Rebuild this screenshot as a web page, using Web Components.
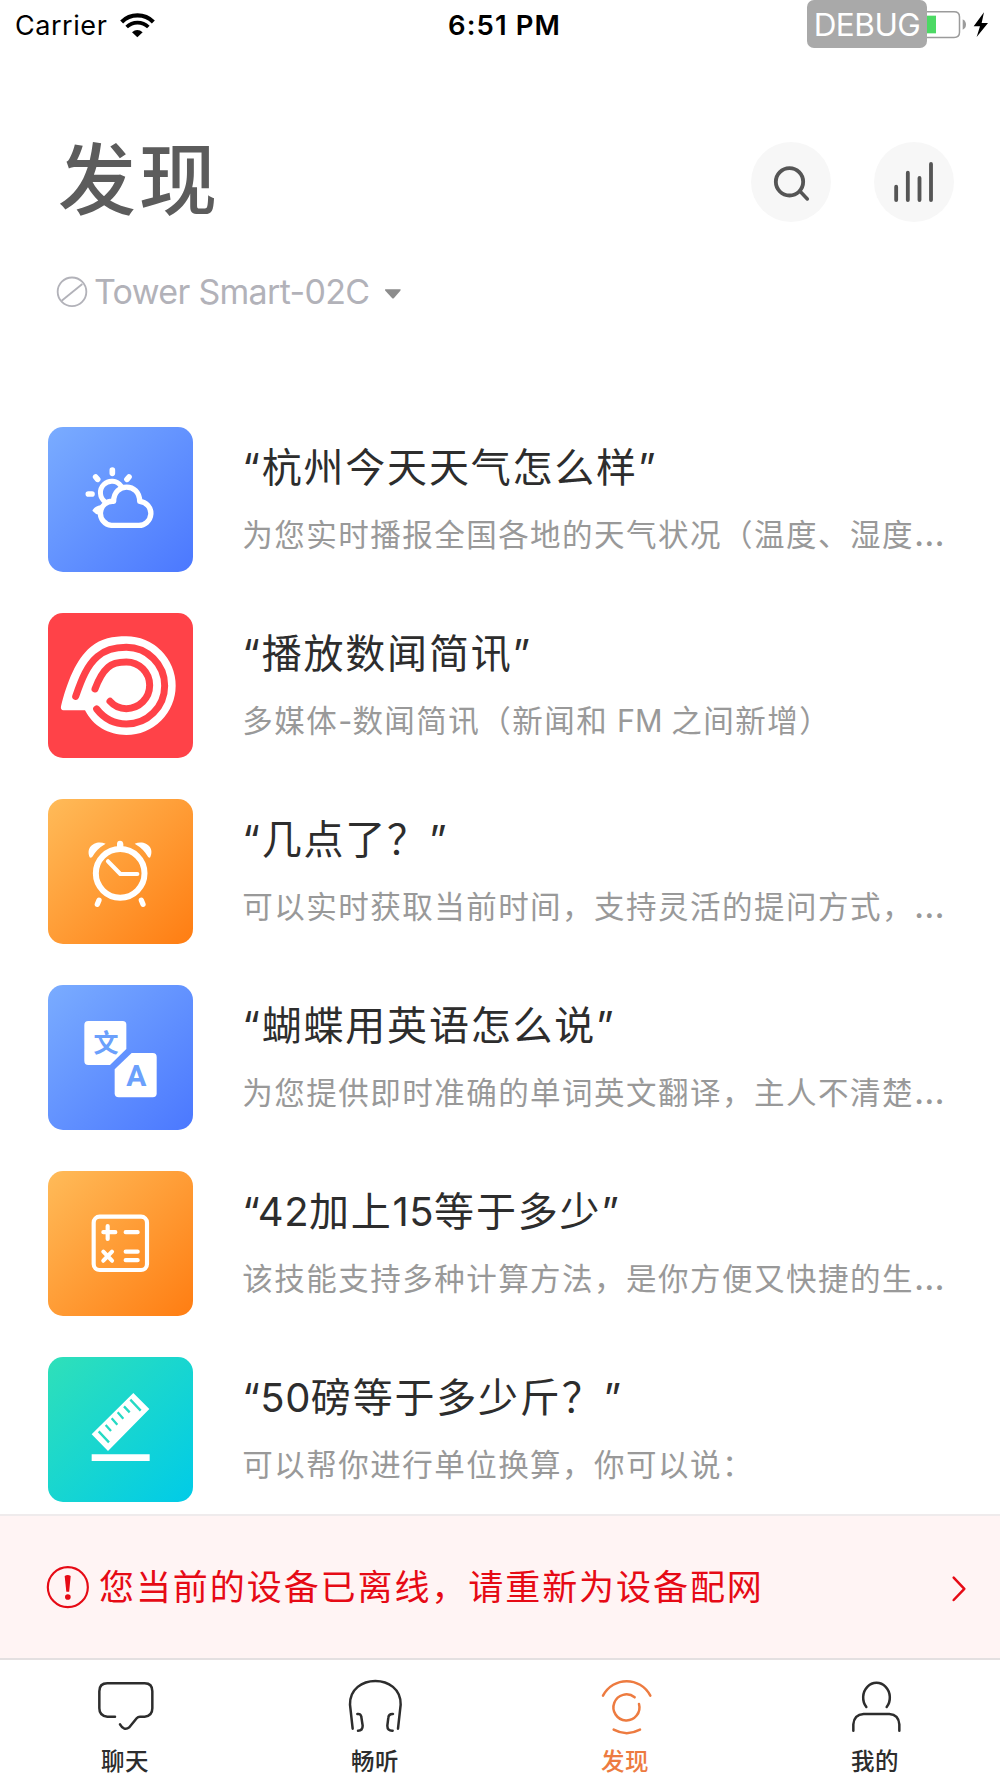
<!DOCTYPE html>
<html lang="zh-CN">
<head>
<meta charset="utf-8">
<title>发现</title>
<style>
html,body{margin:0;padding:0;background:#fff}
body{font-family:Inter,"Noto Sans CJK SC",sans-serif;color:#2d2d2d}
</style>
</head>
<body>
<discover-app></discover-app>
<script>
const define=(name,html)=>customElements.define(name,class extends HTMLElement{
  constructor(){
    super();
    const t=document.createElement('template');
    t.innerHTML=html;
    this.attachShadow({mode:'open'}).append(t.content.cloneNode(true));
  }
});

define('status-bar',`<style>
:host{display:grid;grid-template-columns:1fr auto 1fr;height:51px;color:#000;font-size:27px;line-height:50px}
.l,.r{display:flex;align-items:center}
.l{padding-left:15px;gap:13px;letter-spacing:.55px}
.l svg{margin-top:-2px}
.m{font-weight:600;font-size:27.500px;letter-spacing:1.100px;padding:0 0 0 9px}
.r{justify-content:flex-end;padding-right:12px}
.debug{box-sizing:border-box;width:120px;height:48px;margin-bottom:3px;border-radius:7px;background:#a9a9a9;color:#fff;font-size:31.500px;line-height:49px;text-align:center;letter-spacing:-.5px;font-weight:400}
.r svg{margin-top:-2px}
svg{display:block}
</style>
<div class="l"><span>Carrier</span><svg width="36" height="26" viewBox="361 33 108 78" fill="none" stroke="#000"><path d="M366 63A67 67 0 0 1 461 63" stroke-width="12.500"/><path d="M381 78A47 47 0 0 1 446 78" stroke-width="11"/><path d="M397 94Q413 80 429 94L413 109Z" fill="#000" stroke="none"/></svg></div>
<div class="m">6:51 PM</div>
<div class="r"><div class="debug">DEBUG</div><svg width="61" height="30" viewBox="781 29 183 90"><path d="M781 34.500H862Q878.500 34.500 878.500 50V96Q878.500 111.500 862 111.500H781" fill="none" stroke="#9b9b9b" stroke-width="4.500"/><path d="M781 46H808V99H781Z" fill="#4cd964"/><path d="M888 57Q898 63 898 73T888 88Z" fill="#9b9b9b"/><path d="M952 36L921 78H940L930 110L964 68H945Z" fill="#000"/></svg></div>`);

define('round-button',`<style>
:host{display:flex;width:80px;height:80px;border-radius:50%;background:#f7f7f7;align-items:center;justify-content:center}
::slotted(svg){display:block;width:80px;height:80px}
</style><slot></slot>`);

define('page-header',`<style>
:host{display:flex;justify-content:space-between;height:240px;box-sizing:border-box;padding:84px 46px 0 58px}
h1{margin:0;height:92px;line-height:92px;font-size:78px;font-weight:500;letter-spacing:3px;color:#5c5c5c}
.actions{display:flex;gap:43px;padding-top:7px}
</style>
<h1><slot></slot></h1>
<div class="actions">
<round-button><svg viewBox="753 425 240 240" fill="none" stroke="#555" stroke-linecap="round"><circle cx="868.500" cy="544.500" r="41" stroke-width="11.500"/><path d="M900 573L922 596" stroke-width="10.500"/></svg></round-button>
<round-button><svg viewBox="1123 425 240 240" fill="none" stroke="#555" stroke-width="11.500" stroke-linecap="round"><path d="M1189.500 559V599M1224.500 517V599M1259.500 533V599M1294 491V599"/></svg></round-button>
</div>`);

define('device-picker',`<style>
:host{display:flex;align-items:center;height:50px;margin-top:-24px;padding-left:56px;color:#b2b2b9;font-size:34px;line-height:50px;letter-spacing:-.68px}
.o{width:32px;height:32px;margin-right:6px}
.c{width:18px;height:12px;margin-left:15px;margin-top:3px}
</style>
<svg class="o" viewBox="168 826 96 96" fill="none" stroke="#b2b2b9" stroke-width="5.500"><circle cx="216" cy="873.500" r="43"/><path d="M185 900L247 850"/></svg>
<slot></slot>
<svg class="c" viewBox="1152 860 54 36"><path d="M1157 864H1200Q1204 864 1201 868L1182 890Q1179 893 1176 890L1156 868Q1153 864 1157 864Z" fill="#8c8c8c"/></svg>`);

define('skill-card',`<style>
:host{display:flex;height:145px;gap:49px}
.tile{flex:none;width:145px;height:145px;border-radius:15px;overflow:hidden;background:var(--tile)}
::slotted(svg){display:block;width:145px;height:145px}
.t{flex:1;min-width:0;display:flex;flex-direction:column;padding-top:10px}
.a{height:62px;line-height:62px;font-size:40px;letter-spacing:1.800px;color:#2d2d2d;white-space:nowrap}
.b{height:50px;margin-top:11px;line-height:50px;font-size:30.500px;letter-spacing:1.480px;color:#999;white-space:nowrap}
</style>
<div class="tile"><slot name="icon"></slot></div>
<div class="t"><div class="a"><slot name="title"></slot></div><div class="b"><slot></slot></div></div>`);

define('offline-banner',`<style>
:host{display:flex;align-items:center;box-sizing:border-box;height:144px;border-top:2px solid #efebec;background:#fff4f4;padding:0 31px 0 46px;color:#e60a15;font-size:35px;letter-spacing:1.930px}
.w{width:43px;height:43px;margin-right:10px}
.x{flex:1;line-height:50px}
.v{width:20px;height:30px;margin-top:4px}
</style>
<svg class="w" viewBox="138 196 129 129" fill="none" stroke="#e60a15"><circle cx="203.500" cy="259.500" r="60" stroke-width="6.500"/><path d="M194 226Q203 220 212 226L207.500 273H199Z" fill="#e60a15" stroke="none"/><circle cx="203.500" cy="289" r="8.500" fill="#e60a15" stroke="none"/></svg>
<div class="x"><slot></slot></div>
<svg class="v" viewBox="1346 222 60 90" fill="none" stroke="#e60a15" stroke-width="7.500" stroke-linecap="round" stroke-linejoin="round"><path d="M1360 233L1392 266.500L1360 300"/></svg>`);

define('tab-item',`<style>
:host{display:flex;flex:1;flex-direction:column;align-items:center;color:#2d2d2d;font-size:23.500px;font-weight:500;letter-spacing:.5px}
:host([active]){color:#ed7b40}
::slotted(svg){display:block;flex:none;width:80px;height:70px;fill:none;stroke:currentColor;stroke-width:7.500px;stroke-linecap:round;stroke-linejoin:round}
.n{flex:none;line-height:34px;margin-top:-2px}
</style><slot name="icon"></slot><div class="n"><slot></slot></div>`);

define('tab-bar',`<style>
:host{display:flex;box-sizing:border-box;height:120px;border-top:2px solid #e4e0e1;background:#fff;padding-top:17px}
</style><slot></slot>`);

define('discover-app',`<style>
:host{display:flex;flex-direction:column;width:1000px;height:1778px;overflow:hidden;background:#fff}
main{display:flex;flex-direction:column;gap:41px;height:1087px;flex:none;box-sizing:border-box;padding:0 48px 0 48.300px;margin-top:110px;overflow:hidden}
main>*{flex:none;--blue:linear-gradient(135deg,#7aacff,#4b78ff);--orange:linear-gradient(135deg,#ffbb59,#ff7d12);--red:#ff4248;--teal:linear-gradient(135deg,#2fe0b9,#00cbe8)}
offline-banner,tab-bar{flex:none}
i{font-style:normal;letter-spacing:.45px}
.s{letter-spacing:.1px}
.e{font-size:35.500px;line-height:0;letter-spacing:0}
</style>
<status-bar></status-bar>
<page-header>发现</page-header>
<device-picker>Tower Smart-02C</device-picker>
<main>
<skill-card style="--tile:var(--blue)">
<svg slot="icon" viewBox="55 51 435 435" fill="none" stroke="#fff" stroke-width="17" stroke-linecap="round"><path d="M248 180V190M198 201L204 208M298 201L292 208M176 252H187"/><path d="M226 275A34 34 0 1 1 274 228" stroke-width="15"/><path d="M188 302Q196 288 213 286L210 315Q197 313 188 302Z" fill="#fff" stroke="none"/><path d="M245 346A32 32 0 1 1 252 274C252 217 330 217 330 274A36 36 0 0 1 325 346Z" stroke-width="16" stroke-linejoin="round"/></svg>
<span slot="title">“杭州今天天气怎么样”</span>为您实时播报全国各地的天气状况（温度、湿度<i class="e">…</i>
</skill-card>
<skill-card style="--tile:var(--red)">
<svg slot="icon" viewBox="55 608 435 435"><path d="M94 888C112 815 140 745 183 710C215 684 250 678 290 678A148 148 0 0 1 290 974C236 974 190 947 166 900H101Q92 899 94 888Z" fill="#fff"/><g fill="none" stroke="#ff4248" stroke-width="21" stroke-linecap="round"><path d="M138 858C157 803 173 765 203 739C228 717 258 711 290 711A115 115 0 0 1 290 941Q236 941 201 896"/><path d="M196 836C207 806 218 786 235 771C250 757 270 755 290 755A70 70 0 0 1 290 895Q260 895 241 873"/></g></svg>
<span slot="title">“播放数闻简讯”</span>多媒体<i class="s">-</i>数闻简讯（新闻和<i class="s"> FM </i>之间新增）
</skill-card>
<skill-card style="--tile:var(--orange)">
<svg slot="icon" viewBox="55 57 435 435" fill="none" stroke="#fff"><circle cx="271.500" cy="280" r="73" stroke-width="18"/><path d="M262 202V192Q262 182 271 182T281 192V202Z" fill="#fff" stroke="none"/><path d="M181 233C166 203 195 178 228 191Q200 207 187 232ZM361 233C377 203 347 178 315 191Q343 207 356 232Z" fill="#fff" stroke="none"/><path d="M235 244L272 282H323" stroke-width="12.500" stroke-linecap="round" stroke-linejoin="round"/><path d="M208 361L203 373M335 361L340 373" stroke-width="16" stroke-linecap="round"/></svg>
<span slot="title">“几点了？”</span>可以实时获取当前时间，支持灵活的提问方式，<i class="e">…</i>
</skill-card>
<skill-card style="--tile:var(--blue)">
<svg slot="icon" viewBox="55 615 435 435"><path d="M176 723H279Q290 723 290 734V807L241 855H176Q164 855 164 843V735Q164 723 176 723Z" fill="#fff"/><path d="M306 819H369Q381 819 381 831V940Q381 952 369 952H267Q255 952 255 940V868Z" fill="#fff"/><text x="229" y="816" font-size="75" font-weight="700" text-anchor="middle" fill="#6ba0fc" font-family="Noto Sans CJK SC">文</text><text x="320" y="918" font-size="90" font-weight="700" text-anchor="middle" fill="#6ba0fc" font-family="Roboto">A</text></svg>
<span slot="title">“蝴蝶用英语怎么说”</span>为您提供即时准确的单词英文翻译，主人不清楚<i class="e">…</i>
</skill-card>
<skill-card style="--tile:var(--orange)">
<svg slot="icon" viewBox="55 63 435 435" fill="none" stroke="#fff" stroke-width="12.500" stroke-linecap="round"><rect x="192" y="200" width="160" height="160" rx="18"/><path d="M221 246.500H257M234 228V267M288 246.500H324M288 305H324M288 330.500H324M221 305L247 332M247 305L221 332"/></svg>
<span slot="title"><i>“42</i>加上<i>15</i>等于多少”</span>该技能支持多种计算方法，是你方便又快捷的生<i class="e">…</i>
</skill-card>
<skill-card style="--tile:var(--teal)">
<svg slot="icon" viewBox="55 621 435 435"><path d="M311 729L359 777L235 903L186 853ZM186 913H360V933H186Z" fill="#fff"/><path d="M207 844L238 877M228 825L244 843M246 805L263 824M264 787L281 806M283 769L300 787M302 749L333 782" stroke="#26dac4" stroke-width="7"/></svg>
<span slot="title"><i>“50</i>磅等于多少斤？”</span>可以帮你进行单位换算，你可以说：
</skill-card>
</main>
<offline-banner>您当前的设备已离线，请重新为设备配网</offline-banner>
<tab-bar>
<tab-item><svg slot="icon" viewBox="255 532 240 210"><path d="M345 651H322Q298 649 298 626V575Q298 551 322 551H434Q457 551 457 575V626Q457 649 434 651H420Q414 651 410 656L388 683Q372 695 360 674"/></svg>聊天</tab-item>
<tab-item><svg slot="icon" viewBox="1005 532 240 210"><path d="M1058 687L1050 615C1048 520 1204 520 1202 615L1194 687M1072 643Q1083 641 1084 652L1088 678Q1088 693 1074 693M1179 643Q1166 642 1165 654L1162 678Q1162 694 1178 693"/></svg>畅听</tab-item>
<tab-item active><svg slot="icon" viewBox="255 532 240 210"><path d="M309 588C340 530 420 530 451 588M404 593A39 39 0 1 0 417 613M341 690Q380 711 420 690"/></svg>发现</tab-item>
<tab-item><svg slot="icon" viewBox="1005 532 240 210"><path d="M1099 622A40 44 0 1 1 1160 622M1060 693V674Q1062 645 1091 643H1168Q1196 645 1198 674V693"/></svg>我的</tab-item>
</tab-bar>`);
</script>
</body>
</html>
